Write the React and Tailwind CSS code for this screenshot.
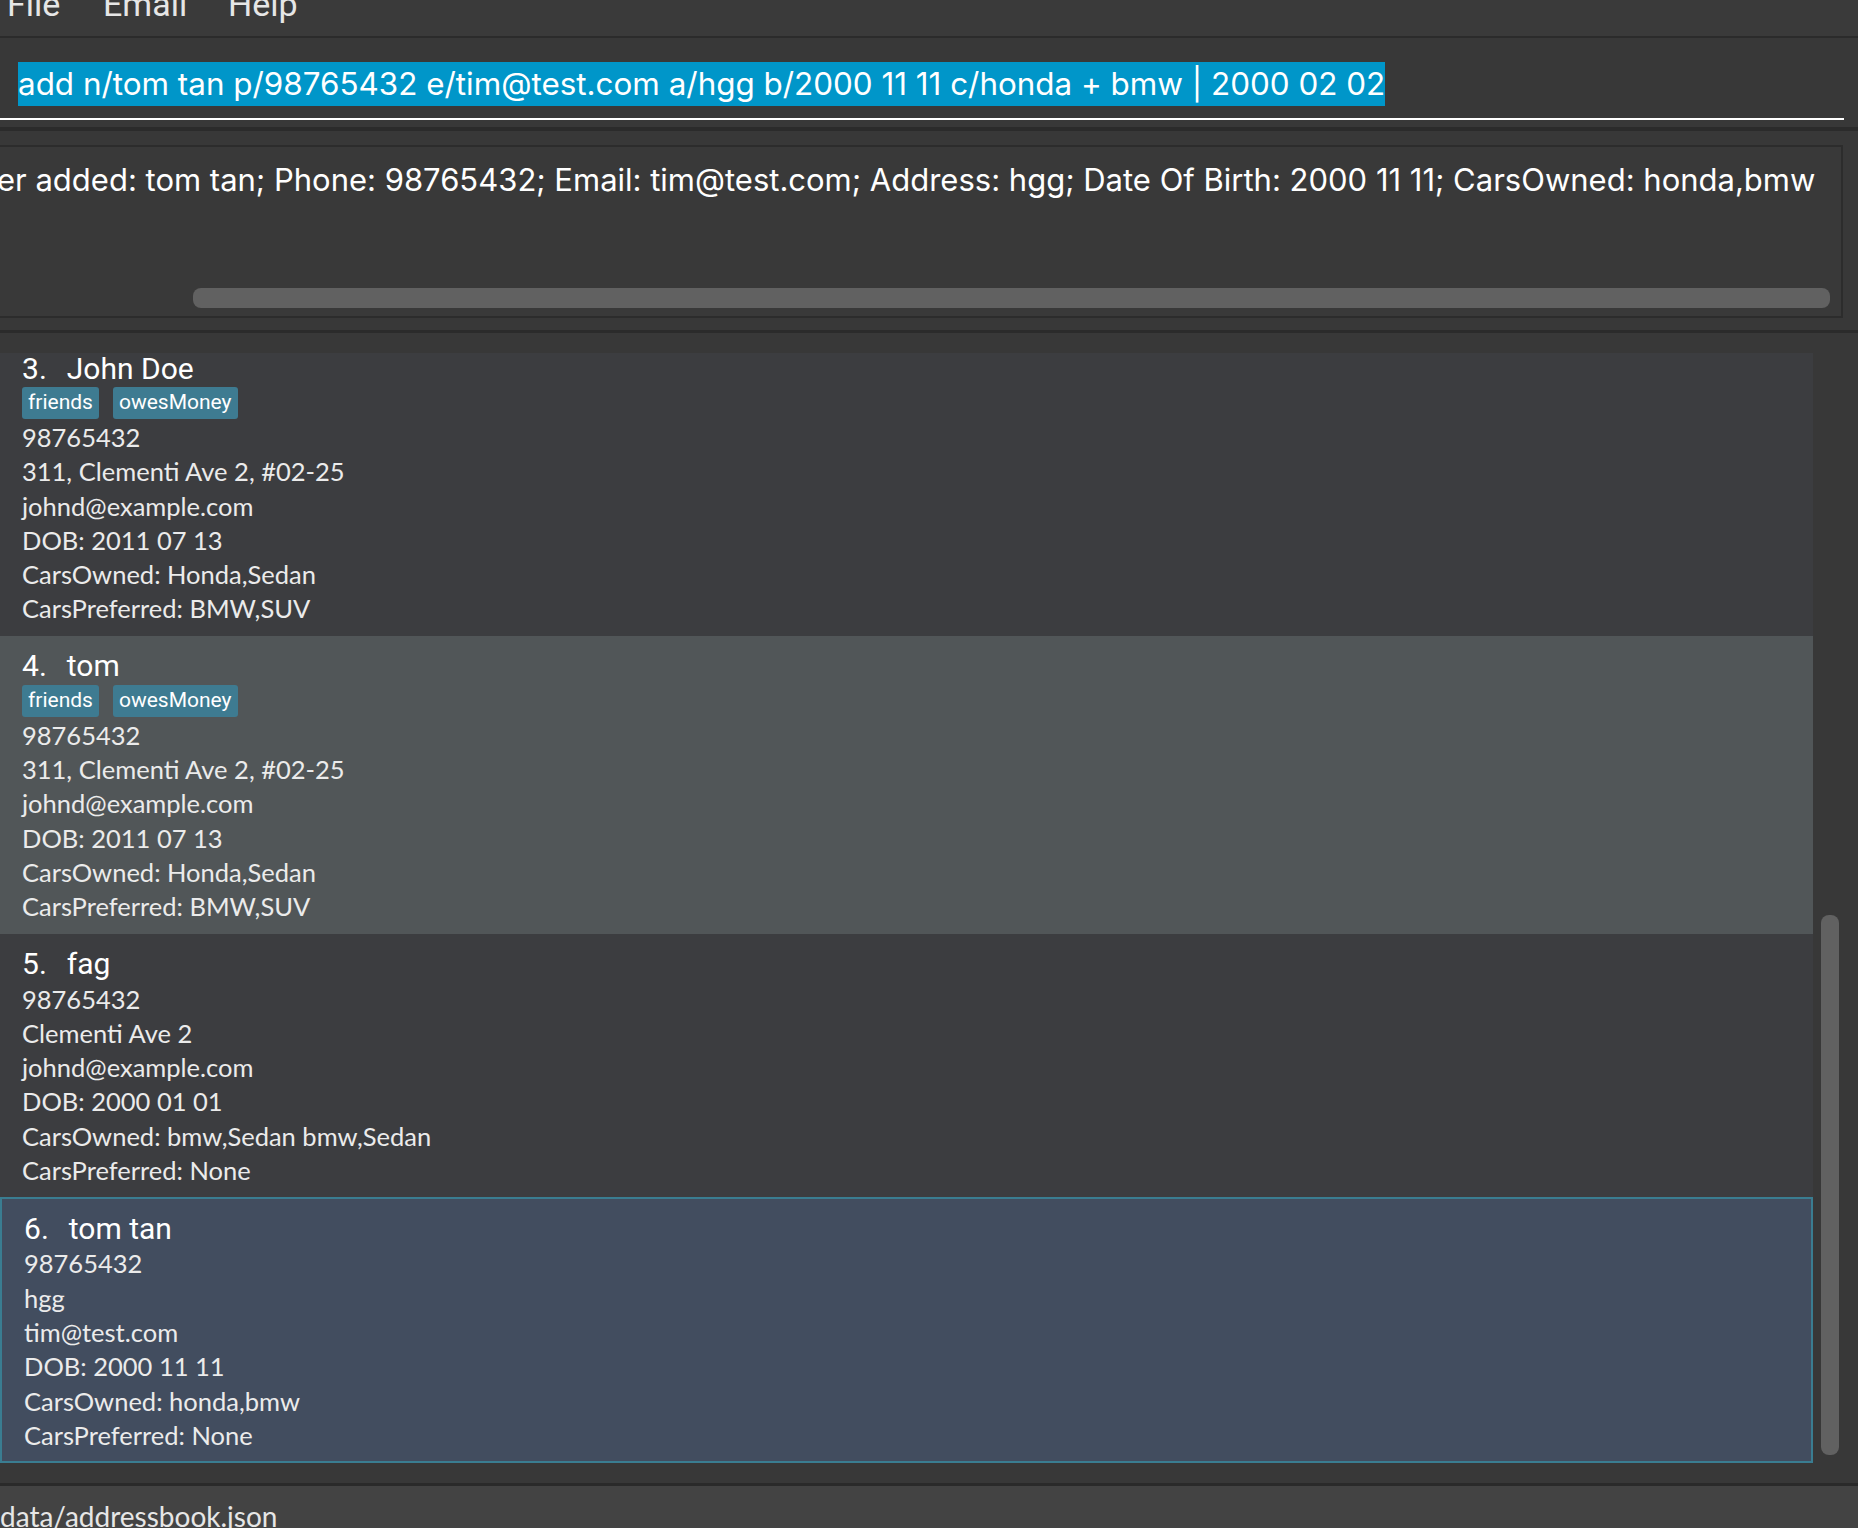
import React from 'react';

const customers = [
  {
    idx: 3,
    name: 'John Doe',
    tags: ['friends', 'owesMoney'],
    phone: '98765432',
    address: '311, Clementi Ave 2, #02-25',
    email: 'johnd@example.com',
    dob: '2011 07 13',
    owned: 'Honda,Sedan',
    preferred: 'BMW,SUV',
    tone: 'dark',
  },
  {
    idx: 4,
    name: 'tom',
    tags: ['friends', 'owesMoney'],
    phone: '98765432',
    address: '311, Clementi Ave 2, #02-25',
    email: 'johnd@example.com',
    dob: '2011 07 13',
    owned: 'Honda,Sedan',
    preferred: 'BMW,SUV',
    tone: 'light',
  },
  {
    idx: 5,
    name: 'fag',
    tags: [],
    phone: '98765432',
    address: 'Clementi Ave 2',
    email: 'johnd@example.com',
    dob: '2000 01 01',
    owned: 'bmw,Sedan bmw,Sedan',
    preferred: 'None',
    tone: 'dark',
  },
  {
    idx: 6,
    name: 'tom tan',
    tags: [],
    phone: '98765432',
    address: 'hgg',
    email: 'tim@test.com',
    dob: '2000 11 11',
    owned: 'honda,bmw',
    preferred: 'None',
    tone: 'selected',
  },
];

const toneClass = {
  dark: 'bg-[#3c3d40] pt-[12px] pb-[10px] pl-[22px]',
  light: 'bg-[#515658] pt-[12px] pb-[10px] pl-[22px]',
  selected: 'bg-[#424d5f] border-2 border-[#3a7d91] pt-[11px] pb-[9px] pl-[22px]',
};

const CustomerCard = ({ c, first }) => (
  <div className={`${toneClass[c.tone]} ${first ? '-mt-[15px]' : ''}`}>
    <div className="h-[36px] flex items-center text-[30px] text-white">
      <span>{c.idx}.</span>
      <span className="ml-[20px]">{c.name}</span>
    </div>
    {c.tags.length > 0 && (
      <div className="h-[34px] flex items-center gap-[14px]">
        {c.tags.map((t) => (
          <span
            key={t}
            className="h-[32px] px-[6px] flex items-center rounded-[3px] bg-[#3e7b91] text-[21px] text-white"
          >
            {t}
          </span>
        ))}
      </div>
    )}
    <div className="font-['Lato',sans-serif] text-[25.5px] leading-[34.3px] text-[#ebebeb]">
      <div>{c.phone}</div>
      <div>{c.address}</div>
      <div>{c.email}</div>
      <div>DOB: {c.dob}</div>
      <div>CarsOwned: {c.owned}</div>
      <div>CarsPreferred: {c.preferred}</div>
    </div>
  </div>
);

export default function App() {
  return (
    <div className="w-[1858px] h-[1528px] overflow-hidden bg-[#383838] flex flex-col font-['Roboto',sans-serif] text-white">
      {/* Menu bar */}
      <div className="h-[36px] shrink-0 bg-[#3a3a3a] flex items-start overflow-hidden text-[34px] text-[#e6e6e6]">
        <div className="flex -mt-[13px] leading-[34px]">
          <span className="pl-[7px] w-[103px]">File</span>
          <span className="w-[125px]">Email</span>
          <span>Help</span>
        </div>
      </div>
      <div className="h-[2px] shrink-0 bg-[#2b2b2b]" />

      {/* Command box */}
      <div className="h-[89px] shrink-0 bg-[#383838] pt-[24px] pr-[14px]">
        <div className="pl-[18px] h-[56px]">
          <span className="inline-block h-[44px] leading-[44px] bg-[#0096c9] font-['Inter',sans-serif] text-[31.4px] text-white whitespace-nowrap">
            add n/tom tan p/98765432 e/tim@test.com a/hgg b/2000 11 11 c/honda + bmw | 2000 02 02
          </span>
        </div>
        <div className="h-[2px] bg-white" />
      </div>
      <div className="h-[4px] shrink-0 bg-[#2b2b2b]" />

      {/* Result display */}
      <div className="h-[199px] shrink-0 bg-[#383838] pt-[14px] pb-[12px] pr-[15px]">
        <div className="h-full border-2 border-l-0 border-[#2c2c2c] bg-[#393939] flex flex-col justify-between overflow-hidden">
          <div className="pt-[13px] leading-[40px] font-['Inter',sans-serif] text-[31px] text-white whitespace-nowrap -ml-[3px]">
            er added: tom tan; Phone: 98765432; Email: tim@test.com; Address: hgg; Date Of Birth: 2000 11 11; CarsOwned: honda,bmw
          </div>
          <div className="h-[20px] mb-[8px] ml-[193px] mr-[11px] rounded-[8px] bg-[#616161]" />
        </div>
      </div>
      <div className="h-[3px] shrink-0 bg-[#2b2b2b]" />

      {/* Customer list */}
      <div className="flex-1 min-h-0 bg-[#383838] pt-[20px] pb-[20px] flex">
        <div className="w-[1813px] h-full overflow-hidden flex flex-col">
          {customers.map((c, i) => (
            <CustomerCard key={c.idx} c={c} first={i === 0} />
          ))}
        </div>
        <div className="flex-1 pl-[8px]">
          <div className="mt-[562px] w-[18px] h-[540px] rounded-[8px] bg-[#616161]" />
        </div>
      </div>

      {/* Status bar */}
      <div className="h-[3px] shrink-0 bg-[#2a2a2a]" />
      <div className="h-[42px] shrink-0 bg-[#434343] overflow-hidden">
        <div className="pt-[13px] font-['Lato',sans-serif] text-[28px] leading-[34px] text-[#e6e6e6]">data/addressbook.json</div>
      </div>
    </div>
  );
}
